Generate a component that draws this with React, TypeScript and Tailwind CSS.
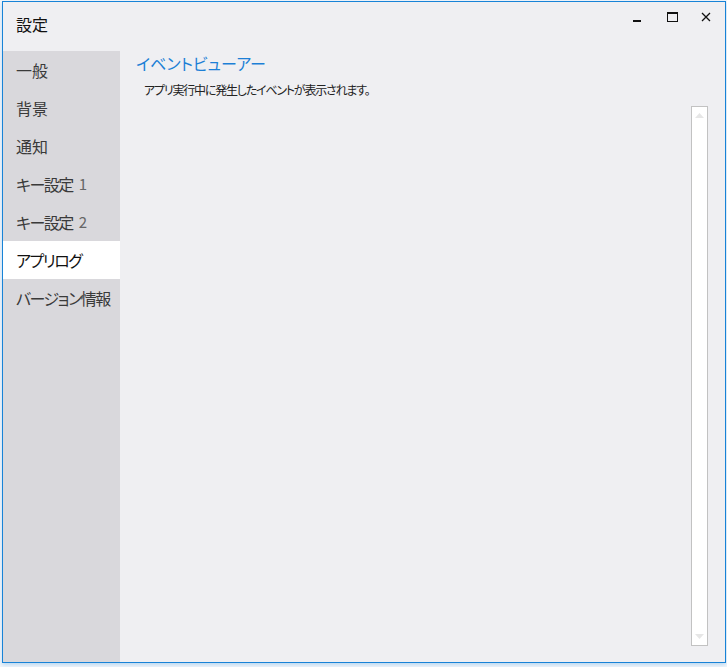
import React from 'react';

const items = [
  { label: '一般', num: '', tight: false },
  { label: '背景', num: '', tight: false },
  { label: '通知', num: '', tight: false },
  { label: 'キー設定', num: '1', tight: true },
  { label: 'キー設定', num: '2', tight: true },
  { label: 'アプリログ', num: '', tight: true },
  { label: 'バージョン情報', num: '', tight: true },
];

const App = () => {
  const selected = 5;
  return (
    <div
      className="w-[727px] h-[667px] bg-[#f3f6fa] overflow-hidden [font-feature-settings:'palt']"
      style={{ fontFamily: '"Noto Sans CJK JP", "Noto Sans", sans-serif' }}
    >
      <div className="ml-[2px] mt-[1px] w-[724px] h-[662px] border border-[#1883d7] bg-[#efeff2] flex flex-col shadow-[0_2px_4px_rgba(24,131,215,0.25)]">
        {/* Title bar */}
        <div className="h-[49px] flex items-start shrink-0">
          <div className="pl-[13px] pt-[10px] text-[16px] leading-[24px] text-[#111]">設定</div>
          <div className="ml-auto flex items-start pt-[10px] pr-[14px]">
            <div className="w-[8px] h-[10px] flex items-end mr-[26px]">
              <div className="w-[8px] h-[2px] bg-[#111]" />
            </div>
            <div className="w-[11px] h-[10px] border border-[#111] border-t-2 mr-[23px]" />
            <svg width="10" height="10" viewBox="0 0 10 10">
              <path d="M1 1 L9 9 M9 1 L1 9" stroke="#111" strokeWidth="1.3" />
            </svg>
          </div>
        </div>

        <div className="flex flex-1 min-h-0">
          {/* Sidebar */}
          <div className="w-[117px] bg-[#d9d8dc] flex flex-col shrink-0">
            {items.map((it, i) => (
              <div
                key={it.label + it.num}
                className={
                  'h-[38px] flex items-center pl-[13px] text-[16px] whitespace-nowrap ' +
                  (it.tight ? 'tracking-[-1.5px] ' : '') +
                  (i === selected ? 'bg-white text-[#111]' : 'text-[#3a3a3a]')
                }
              >
                {it.label}
                {it.num && <span className="ml-[6px] text-[15px] text-[#666] tracking-normal">{it.num}</span>}
              </div>
            ))}
          </div>

          {/* Content */}
          <div className="flex-1 flex flex-col pl-[16px] pr-[17px]">
            <div className="text-[16px] leading-[24px] text-[#1c7fd6]">イベントビューアー</div>
            <div className="pl-[8px] mt-[6px] text-[12px] leading-[18px] tracking-[-1.2px] text-[#222]">
              アプリ実行中に発生したイベントが表示されます。
            </div>
            <div className="flex justify-end mt-[7px]">
              <div className="w-[17px] h-[540px] bg-white border border-[#c2c2c2] flex flex-col justify-between items-center py-[6px]">
                <svg width="9" height="5" viewBox="0 0 9 5">
                  <path d="M0 5 L4.5 0 L9 5 Z" fill="#e6e6e6" />
                </svg>
                <svg width="9" height="5" viewBox="0 0 9 5">
                  <path d="M0 0 L4.5 5 L9 0 Z" fill="#e6e6e6" />
                </svg>
              </div>
            </div>
          </div>
        </div>
      </div>
    </div>
  );
};

export default App;
